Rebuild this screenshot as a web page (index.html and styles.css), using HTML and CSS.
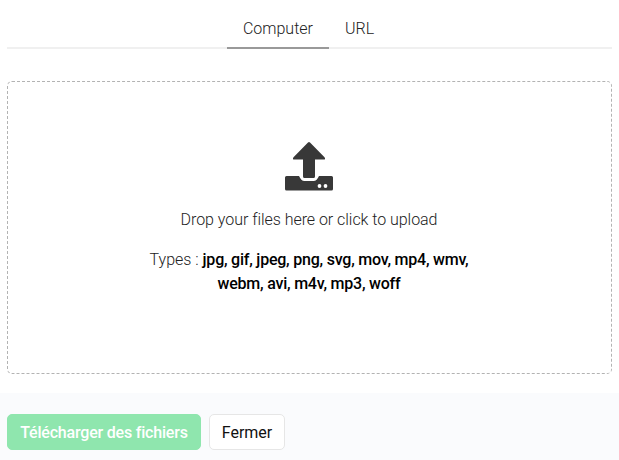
FILE: index.html
```
<!DOCTYPE html>
<html lang="fr">
<head>
    <meta charset="UTF-8">
    <meta name="viewport" content="width=device-width, initial-scale=1.0">
    <title>Upload</title>
    <link rel="stylesheet" href="styles.css">
</head>
<body>
    <div class="uploader">
        <nav class="tabs">
            <a class="tab active">Computer</a>
            <a class="tab">URL</a>
        </nav>
        <div class="dropzone">
            <svg class="upload-icon" width="50" height="50" viewBox="0 0 50 50">
                <path class="tray" d="M2.500 35H15c1.500 3 3 5 5.500 5h9c2.500 0 4-2 5.500-5h12.500q1.500 0 1.500 1.500V48q0 1.500-1.500 1.500h-45Q1 49.500 1 48V36.500Q1 35 2.500 35z"/>
                <path class="arrow" d="M24 1.500q1-1 2 0L40.500 16.200q1.500 2.300-.8 2.300H31v17q0 1.500-1.500 1.500h-9q-1.500 0-1.500-1.500v-17h-8.700q-2.300 0-.8-2.300z"/>
                <circle cx="35.500" cy="45" r="1.900"/>
                <circle cx="41.500" cy="45" r="1.900"/>
            </svg>
            <p class="hint">Drop your files here or click to upload</p>
            <p class="types"><span class="types-label">Types :</span> <strong class="types-list">jpg, gif, jpeg, png, svg, mov, mp4, wmv,</strong><br><strong class="types-more">webm, avi, m4v, mp3, woff</strong></p>
        </div>
    </div>
    <footer class="actions">
        <button class="btn btn-upload"><span>Télécharger des fichiers</span></button>
        <button class="btn btn-close"><span>Fermer</span></button>
    </footer>
</body>
</html>
```
FILE: styles.css
```
* {
  box-sizing: border-box;
}

body {
  margin: 0;
  height: 460px;
  display: flex;
  flex-direction: column;
  background: #fff;
  color: #222;
  font-family: Roboto, "Liberation Sans", sans-serif;
  font-size: 16px;
  font-weight: 300;
  overflow: hidden;
}

.uploader {
  height: 393px;
  padding: 0 7px;
}

.tabs {
  display: flex;
  justify-content: center;
  height: 49px;
  padding: 8px 2px 0 0;
  border-bottom: 2px solid #f0f0f0;
}

.tab {
  height: 41px;
  padding: 0 16px;
  line-height: 41px;
  border-bottom: 2px solid transparent;
  cursor: pointer;
}

.tab.active {
  border-bottom-color: #999;
}

.dropzone {
  display: flex;
  flex-direction: column;
  align-items: center;
  height: 293px;
  margin-top: 32px;
  padding: 59px 1px 0 0;
  border: 1px dashed #b3b3b3;
  border-radius: 5px;
  text-align: center;
  line-height: 24px;
}

.upload-icon {
  display: block;
  margin-right: 1px;
  fill: #383838;
}

.upload-icon .arrow {
  stroke: #fff;
  stroke-width: 3;
  paint-order: stroke;
}

.upload-icon circle {
  fill: #fff;
}

.hint {
  margin: 17px 0 16px;
  letter-spacing: -0.04px;
}

.types {
  margin: 0;
  white-space: nowrap;
}

.types strong {
  font-weight: 500;
  letter-spacing: -0.22px;
  color: #000;
}

.actions {
  display: flex;
  gap: 8px;
  flex: 1;
  padding: 21px 7px 0;
  background: #fafbfd;
}

.btn {
  height: 36px;
  padding: 0;
  border: 1px solid #e6e6e6;
  border-radius: 5px;
  font-family: inherit;
  font-size: 16px;
  line-height: 35px;
  white-space: nowrap;
  cursor: pointer;
}

.btn-upload {
  width: 194px;
  border-color: #8fe6ae;
  background: #8fe6ae;
  color: #fff;
  font-weight: 500;
  letter-spacing: -0.2px;
}

.btn-close {
  width: 76px;
  background: #fff;
  color: #111;
  font-weight: 400;
}
```
